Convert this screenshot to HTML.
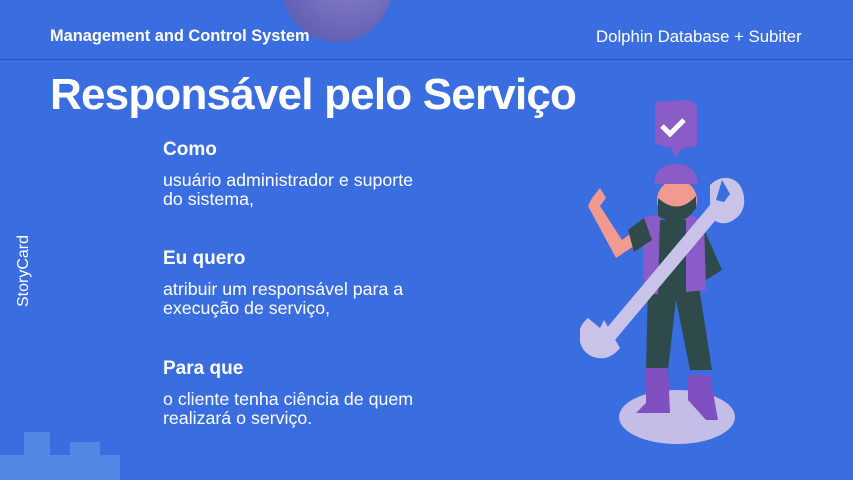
<!DOCTYPE html><html><head><meta charset="utf-8"><style>
body{margin:0;width:853px;height:480px;overflow:hidden;background:#3a6de0;font-family:"Liberation Sans",sans-serif;color:#fff;position:relative}
.a{position:absolute;white-space:nowrap}
</style></head><body>
<div class="a" style="left:282px;top:-68px;width:110px;height:110px;border-radius:50%;background:radial-gradient(circle at 60% 40%,#8a80c8,#6a66b8 60%,#5558b0)"></div>
<div class="a" style="left:50px;top:27px;font-size:16.4px;font-weight:bold">Management and Control System</div>
<div class="a" style="left:596px;top:27px;font-size:16.8px">Dolphin Database + Subiter</div>
<div class="a" style="left:0;top:59px;width:853px;height:1px;background:#2c55b8"></div>
<div class="a" style="left:50px;top:70px;font-size:44px;font-weight:bold;letter-spacing:-0.8px">Responsável pelo Serviço</div>
<div class="a" style="left:163px;top:139px;font-size:19px;font-weight:bold">Como</div>
<div class="a" style="left:163px;top:171px;font-size:17.8px;line-height:19px">usuário administrador e suporte<br>do sistema,</div>
<div class="a" style="left:163px;top:248px;font-size:19px;font-weight:bold">Eu quero</div>
<div class="a" style="left:163px;top:280px;font-size:17.8px;line-height:19px">atribuir um responsável para a<br>execução de serviço,</div>
<div class="a" style="left:163px;top:358px;font-size:19px;font-weight:bold">Para que</div>
<div class="a" style="left:163px;top:390px;font-size:17.8px;line-height:19px">o cliente tenha ciência de quem<br>realizará o serviço.</div>
<div class="a" style="left:-12px;top:262px;font-size:16px;transform:rotate(-90deg);transform-origin:center">StoryCard</div>
<svg class="a" style="left:0;top:410px" width="120" height="70"><g fill="#5a8ee8" opacity=".8"><rect x="24" y="22" width="26" height="60"/><rect x="70" y="32" width="30" height="60"/><rect x="0" y="45" width="120" height="25"/></g></svg>
<svg class="a" style="left:580px;top:90px" width="200" height="360" viewBox="0 0 200 360">
<ellipse cx="97" cy="327" rx="58" ry="27" fill="#c4bde8"/>
<path d="M75 12 l34 -2 l8 6 v40 l-14 2 l-8 10 l-3 -10 l-17 -4z" fill="#8b5cc8"/>
<path d="M82 36 l8 8 l14 -14" stroke="#fff" stroke-width="5" fill="none"/>
<path d="M68 195 l-2 85 h22 l8 -70 l14 70 h22 l-14 -90z" fill="#2f4a4a"/>
<path d="M66 278 h22 l2 45 h-34 l10 -10z M108 285 h22 l8 45 l-12 0 l-18 -20z" fill="#8050c0"/>
<path d="M62 130 h58 l22 50 l-16 10 l-10 10 l-48 0z" fill="#2f4a4a"/>
<path d="M62 128 l18 -4 l-2 80 h-14z M106 124 l18 6 l2 70 l-20 2z" fill="#8b5cc8"/>
<path d="M62 135 l-20 15 l-22 -34 l6 -8 l-6 -10 l-8 10 l-4 8 l28 52 l30 -20z" fill="#f29a8f"/>
<path d="M48 140 l16 -12 l8 22 l-18 12z" fill="#2f4a4a"/>
<circle cx="97" cy="110" r="20" fill="#f29a8f"/>
<path d="M78 108 q20 18 38 -2 v12 q-14 22 -38 8z" fill="#2f4a4a"/>
<path d="M74 94 q2 -20 22 -20 q20 0 22 20z" fill="#8b5cc8"/>
<path d="M30 245 L145 108" stroke="#c9c3ea" stroke-width="14" stroke-linecap="round"/>
<path d="M130 95 q10 -10 22 -6 q10 4 12 18 q2 16 -12 24 q-12 6 -22 -4 z" fill="#c9c3ea"/><path d="M142 90 l8 14 l-6 8 l-8 -2z" fill="#3a6de0"/>
<path d="M40 258 q-10 12 -22 10 q-14 -2 -18 -16 q-4 -14 8 -24 l12 10 l4 -8z" fill="#c9c3ea"/>
</svg>
</body></html>
